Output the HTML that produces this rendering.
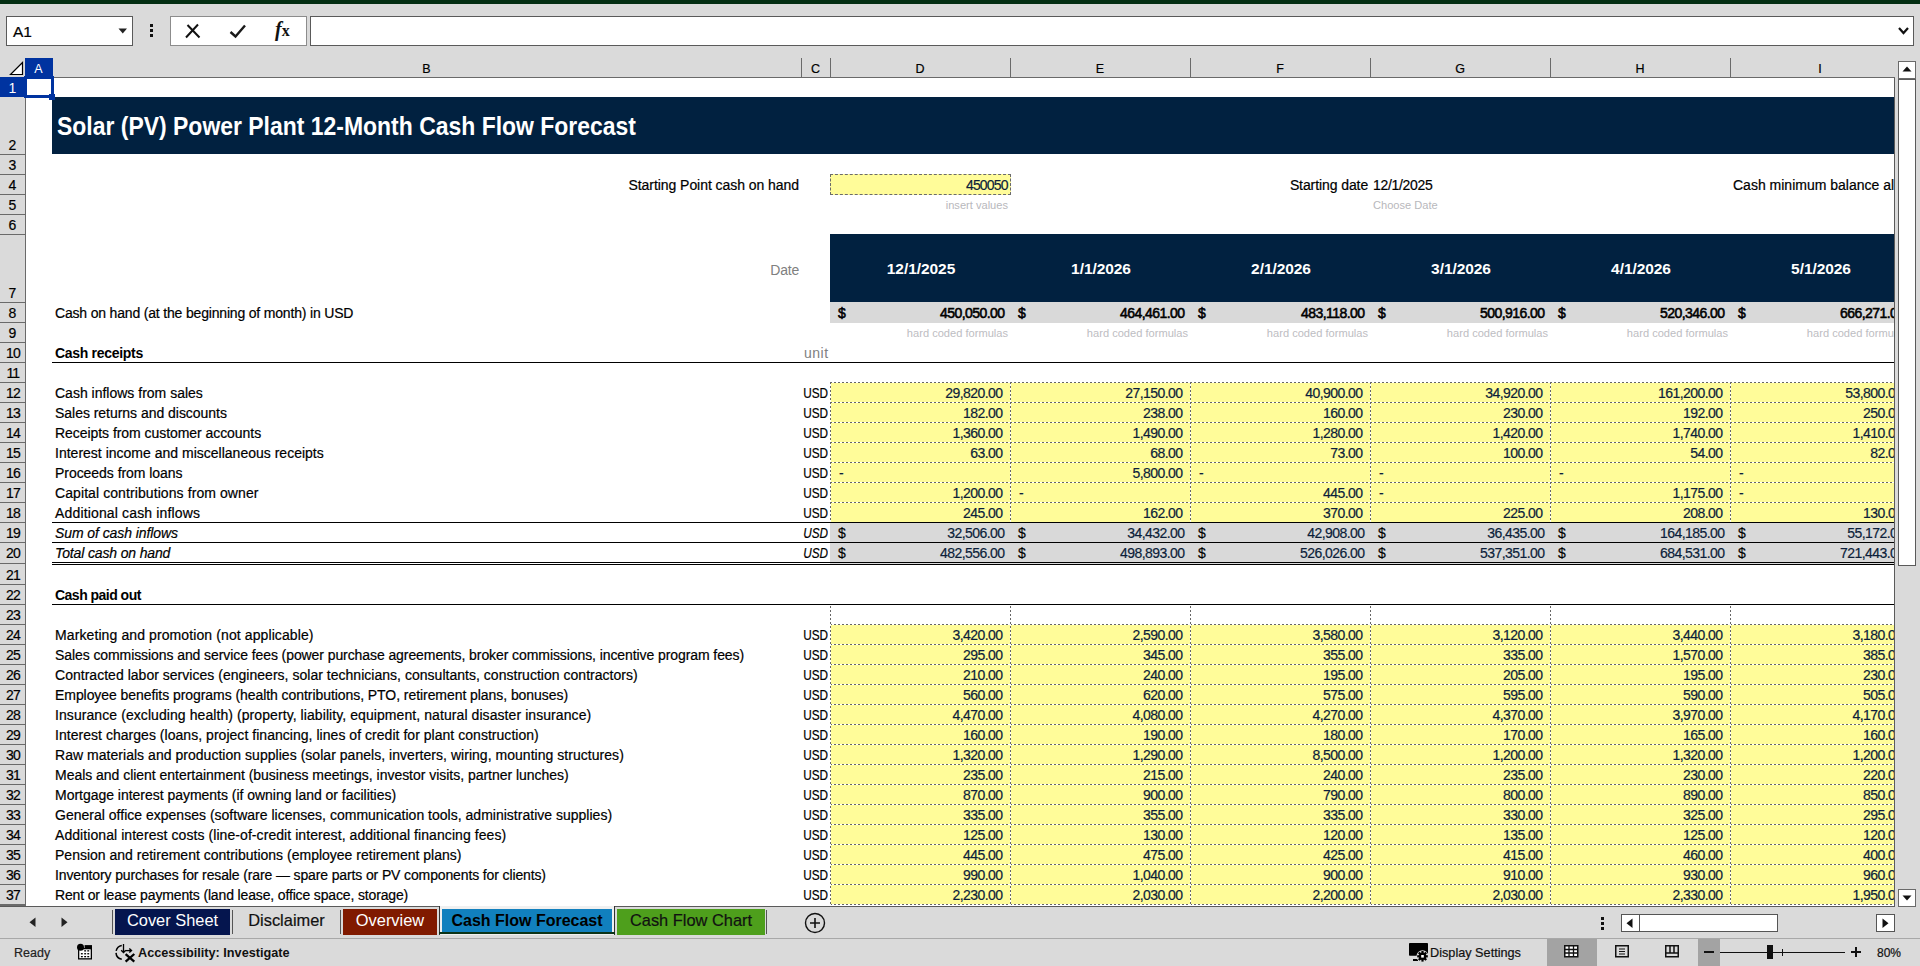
<!DOCTYPE html><html><head><meta charset="utf-8"><style>
html,body{margin:0;padding:0}
body{width:1920px;height:966px;overflow:hidden;position:relative;background:#dadada;font-family:"Liberation Sans", sans-serif}
.a{position:absolute}
.t{white-space:pre;overflow:visible}
</style></head><body>
<div class="a" style="left:0px;top:0px;width:1920px;height:4px;background:#042e12;"></div>
<div class="a" style="left:6px;top:16px;width:127px;height:30px;background:#fff;box-sizing:border-box;border:1px solid #5a5a5a;"></div>
<div class="a t" style="top:12px;height:40px;line-height:40px;font-size:15.5px;color:#000;left:13px;-webkit-text-stroke:0.2px currentColor;">A1</div>
<svg class="a" style="left:118px;top:28px" width="10" height="6"><path d="M0.5 0.5 L9 0.5 L4.75 5.5 Z" fill="#222"/></svg>
<div class="a" style="left:150px;top:24px;width:3px;height:3px;background:#111;"></div>
<div class="a" style="left:150px;top:29px;width:3px;height:3px;background:#111;"></div>
<div class="a" style="left:150px;top:34px;width:3px;height:3px;background:#111;"></div>
<div class="a" style="left:170px;top:16px;width:137px;height:30px;background:#fff;box-sizing:border-box;border:1px solid #8c8c8c;"></div>
<svg class="a" style="left:184px;top:23px" width="18" height="16"><path d="M2 14.5 L14 1.5 M3.5 2 L15.5 14.5" stroke="#111" stroke-width="2" fill="none"/></svg>
<svg class="a" style="left:229px;top:24px" width="19" height="16"><path d="M1.5 8 L6.5 12.5 L16 1.5" stroke="#1a1a1a" stroke-width="2.4" fill="none" stroke-linejoin="miter"/></svg>
<div class="a" style="left:275px;top:18px;font-family:'Liberation Serif',serif;font-style:italic;font-weight:bold;font-size:20px;line-height:22px;color:#111;white-space:pre">f<span style="font-size:16px;margin-left:0px;font-style:normal">x</span></div>
<div class="a" style="left:310px;top:16px;width:1604px;height:30px;background:#fff;box-sizing:border-box;border:1px solid #5a5a5a;"></div>
<svg class="a" style="left:1898px;top:27px" width="11" height="8"><path d="M1 1 L5.5 6 L10 1" stroke="#111" stroke-width="2.2" fill="none"/></svg>
<div class="a" style="left:25px;top:77px;width:1870px;height:829px;background:#fff;"></div>
<div class="a" style="left:25px;top:77px;width:1870px;height:829px;overflow:hidden">
<div class="a" style="left:27px;top:20px;width:1843px;height:57px;background:#012140;"></div>
<div class="a t" style="top:29px;height:40px;line-height:40px;font-size:25px;color:#fff;font-weight:bold;left:32px;transform:scaleX(0.918);transform-origin:left center;">Solar (PV) Power Plant 12-Month Cash Flow Forecast</div>
<div class="a t" style="top:88px;height:40px;line-height:40px;font-size:14px;color:#000;letter-spacing:-0.05px;left:-725.95px;width:1500px;text-align:right;-webkit-text-stroke:0.2px currentColor;">Starting Point cash on hand</div>
<div class="a" style="left:805px;top:97px;width:181px;height:21px;background:#fffc99;box-sizing:border-box;border:1px dashed #6b6b6b;"></div>
<div class="a t" style="top:88px;height:40px;line-height:40px;font-size:14px;color:#0c1e3a;letter-spacing:-0.8px;left:-517.20px;width:1500px;text-align:right;-webkit-text-stroke:0.2px currentColor;">450050</div>
<div class="a t" style="top:108px;height:40px;line-height:40px;font-size:11.1px;color:#b8b8bc;left:-517.00px;width:1500px;text-align:right;">insert values</div>
<div class="a t" style="top:88px;height:40px;line-height:40px;font-size:14px;color:#000;letter-spacing:-0.09px;left:-156.91px;width:1500px;text-align:right;-webkit-text-stroke:0.2px currentColor;">Starting date</div>
<div class="a t" style="top:88px;height:40px;line-height:40px;font-size:14px;color:#000;letter-spacing:-0.31px;left:1348px;-webkit-text-stroke:0.2px currentColor;">12/1/2025</div>
<div class="a t" style="top:108px;height:40px;line-height:40px;font-size:11.1px;color:#b8b8bc;left:1348px;">Choose Date</div>
<div class="a t" style="top:88px;height:40px;line-height:40px;font-size:14px;color:#000;left:1708px;-webkit-text-stroke:0.2px currentColor;">Cash minimum balance alert</div>
<div class="a" style="left:805px;top:157px;width:1065px;height:68px;background:#012140;"></div>
<div class="a t" style="top:173px;height:40px;line-height:40px;font-size:14px;color:#808080;letter-spacing:-0.17px;left:-725.83px;width:1500px;text-align:right;">Date</div>
<div class="a t" style="top:172px;height:40px;line-height:40px;font-size:15.5px;color:#fff;font-weight:bold;letter-spacing:-0.06px;left:806.03px;width:180px;text-align:center;">12/1/2025</div>
<div class="a t" style="top:172px;height:40px;line-height:40px;font-size:15.5px;color:#fff;font-weight:bold;letter-spacing:-0.06px;left:986.03px;width:180px;text-align:center;">1/1/2026</div>
<div class="a t" style="top:172px;height:40px;line-height:40px;font-size:15.5px;color:#fff;font-weight:bold;letter-spacing:-0.06px;left:1166.03px;width:180px;text-align:center;">2/1/2026</div>
<div class="a t" style="top:172px;height:40px;line-height:40px;font-size:15.5px;color:#fff;font-weight:bold;letter-spacing:-0.06px;left:1346.03px;width:180px;text-align:center;">3/1/2026</div>
<div class="a t" style="top:172px;height:40px;line-height:40px;font-size:15.5px;color:#fff;font-weight:bold;letter-spacing:-0.06px;left:1526.03px;width:180px;text-align:center;">4/1/2026</div>
<div class="a t" style="top:172px;height:40px;line-height:40px;font-size:15.5px;color:#fff;font-weight:bold;letter-spacing:-0.06px;left:1706.03px;width:180px;text-align:center;">5/1/2026</div>
<div class="a" style="left:805px;top:225px;width:1065px;height:21px;background:#d9d9d9;"></div>
<div class="a t" style="top:216px;height:40px;line-height:40px;font-size:14px;color:#000;letter-spacing:-0.178px;left:30px;-webkit-text-stroke:0.2px currentColor;">Cash on hand (at the beginning of month) in USD</div>
<div class="a t" style="top:216px;height:40px;line-height:40px;font-size:14px;color:#000;left:813px;-webkit-text-stroke:0.2px currentColor;-webkit-text-stroke:0.55px #000;">$</div>
<div class="a t" style="top:216px;height:40px;line-height:40px;font-size:14px;color:#000;letter-spacing:-0.55px;left:-520.45px;width:1500px;text-align:right;-webkit-text-stroke:0.2px currentColor;-webkit-text-stroke:0.55px #000;">450,050.00</div>
<div class="a t" style="top:216px;height:40px;line-height:40px;font-size:14px;color:#000;left:993px;-webkit-text-stroke:0.2px currentColor;-webkit-text-stroke:0.55px #000;">$</div>
<div class="a t" style="top:216px;height:40px;line-height:40px;font-size:14px;color:#000;letter-spacing:-0.55px;left:-340.45px;width:1500px;text-align:right;-webkit-text-stroke:0.2px currentColor;-webkit-text-stroke:0.55px #000;">464,461.00</div>
<div class="a t" style="top:216px;height:40px;line-height:40px;font-size:14px;color:#000;left:1173px;-webkit-text-stroke:0.2px currentColor;-webkit-text-stroke:0.55px #000;">$</div>
<div class="a t" style="top:216px;height:40px;line-height:40px;font-size:14px;color:#000;letter-spacing:-0.55px;left:-160.45px;width:1500px;text-align:right;-webkit-text-stroke:0.2px currentColor;-webkit-text-stroke:0.55px #000;">483,118.00</div>
<div class="a t" style="top:216px;height:40px;line-height:40px;font-size:14px;color:#000;left:1353px;-webkit-text-stroke:0.2px currentColor;-webkit-text-stroke:0.55px #000;">$</div>
<div class="a t" style="top:216px;height:40px;line-height:40px;font-size:14px;color:#000;letter-spacing:-0.55px;left:19.55px;width:1500px;text-align:right;-webkit-text-stroke:0.2px currentColor;-webkit-text-stroke:0.55px #000;">500,916.00</div>
<div class="a t" style="top:216px;height:40px;line-height:40px;font-size:14px;color:#000;left:1533px;-webkit-text-stroke:0.2px currentColor;-webkit-text-stroke:0.55px #000;">$</div>
<div class="a t" style="top:216px;height:40px;line-height:40px;font-size:14px;color:#000;letter-spacing:-0.55px;left:199.55px;width:1500px;text-align:right;-webkit-text-stroke:0.2px currentColor;-webkit-text-stroke:0.55px #000;">520,346.00</div>
<div class="a t" style="top:216px;height:40px;line-height:40px;font-size:14px;color:#000;left:1713px;-webkit-text-stroke:0.2px currentColor;-webkit-text-stroke:0.55px #000;">$</div>
<div class="a t" style="top:216px;height:40px;line-height:40px;font-size:14px;color:#000;letter-spacing:-0.55px;left:379.55px;width:1500px;text-align:right;-webkit-text-stroke:0.2px currentColor;-webkit-text-stroke:0.55px #000;">666,271.00</div>
<div class="a t" style="top:236px;height:40px;line-height:40px;font-size:11.1px;color:#bdbdc2;left:-517.00px;width:1500px;text-align:right;">hard coded formulas</div>
<div class="a t" style="top:236px;height:40px;line-height:40px;font-size:11.1px;color:#bdbdc2;left:-337.00px;width:1500px;text-align:right;">hard coded formulas</div>
<div class="a t" style="top:236px;height:40px;line-height:40px;font-size:11.1px;color:#bdbdc2;left:-157.00px;width:1500px;text-align:right;">hard coded formulas</div>
<div class="a t" style="top:236px;height:40px;line-height:40px;font-size:11.1px;color:#bdbdc2;left:23.00px;width:1500px;text-align:right;">hard coded formulas</div>
<div class="a t" style="top:236px;height:40px;line-height:40px;font-size:11.1px;color:#bdbdc2;left:203.00px;width:1500px;text-align:right;">hard coded formulas</div>
<div class="a t" style="top:236px;height:40px;line-height:40px;font-size:11.1px;color:#bdbdc2;left:383.00px;width:1500px;text-align:right;">hard coded formulas</div>
<div class="a t" style="top:256px;height:40px;line-height:40px;font-size:14px;color:#000;font-weight:bold;letter-spacing:-0.3px;left:30px;">Cash receipts</div>
<div class="a t" style="top:256px;height:40px;line-height:40px;font-size:14px;color:#808080;letter-spacing:0.5px;left:779px;">unit</div>
<div class="a" style="left:27px;top:285px;width:1843px;height:1px;background:#000;"></div>
<div class="a" style="left:805px;top:306px;width:1065px;height:140px;background:#fffc99;"></div>
<div class="a t" style="top:296px;height:40px;line-height:40px;font-size:14px;color:#000;left:30px;-webkit-text-stroke:0.2px currentColor;">Cash inflows from sales</div>
<div class="a t" style="top:296px;height:40px;line-height:40px;font-size:14px;color:#000;left:-697.00px;width:1500px;text-align:right;-webkit-text-stroke:0.2px currentColor;transform:scaleX(0.84);transform-origin:right center;">USD</div>
<div class="a t" style="top:296px;height:40px;line-height:40px;font-size:14px;color:#0c1e3a;letter-spacing:-0.55px;left:-522.45px;width:1500px;text-align:right;-webkit-text-stroke:0.2px currentColor;">29,820.00</div>
<div class="a t" style="top:296px;height:40px;line-height:40px;font-size:14px;color:#0c1e3a;letter-spacing:-0.55px;left:-342.45px;width:1500px;text-align:right;-webkit-text-stroke:0.2px currentColor;">27,150.00</div>
<div class="a t" style="top:296px;height:40px;line-height:40px;font-size:14px;color:#0c1e3a;letter-spacing:-0.55px;left:-162.45px;width:1500px;text-align:right;-webkit-text-stroke:0.2px currentColor;">40,900.00</div>
<div class="a t" style="top:296px;height:40px;line-height:40px;font-size:14px;color:#0c1e3a;letter-spacing:-0.55px;left:17.55px;width:1500px;text-align:right;-webkit-text-stroke:0.2px currentColor;">34,920.00</div>
<div class="a t" style="top:296px;height:40px;line-height:40px;font-size:14px;color:#0c1e3a;letter-spacing:-0.55px;left:197.55px;width:1500px;text-align:right;-webkit-text-stroke:0.2px currentColor;">161,200.00</div>
<div class="a t" style="top:296px;height:40px;line-height:40px;font-size:14px;color:#0c1e3a;letter-spacing:-0.55px;left:377.55px;width:1500px;text-align:right;-webkit-text-stroke:0.2px currentColor;">53,800.00</div>
<div class="a t" style="top:316px;height:40px;line-height:40px;font-size:14px;color:#000;letter-spacing:-0.031px;left:30px;-webkit-text-stroke:0.2px currentColor;">Sales returns and discounts</div>
<div class="a t" style="top:316px;height:40px;line-height:40px;font-size:14px;color:#000;left:-697.00px;width:1500px;text-align:right;-webkit-text-stroke:0.2px currentColor;transform:scaleX(0.84);transform-origin:right center;">USD</div>
<div class="a t" style="top:316px;height:40px;line-height:40px;font-size:14px;color:#0c1e3a;letter-spacing:-0.55px;left:-522.45px;width:1500px;text-align:right;-webkit-text-stroke:0.2px currentColor;">182.00</div>
<div class="a t" style="top:316px;height:40px;line-height:40px;font-size:14px;color:#0c1e3a;letter-spacing:-0.55px;left:-342.45px;width:1500px;text-align:right;-webkit-text-stroke:0.2px currentColor;">238.00</div>
<div class="a t" style="top:316px;height:40px;line-height:40px;font-size:14px;color:#0c1e3a;letter-spacing:-0.55px;left:-162.45px;width:1500px;text-align:right;-webkit-text-stroke:0.2px currentColor;">160.00</div>
<div class="a t" style="top:316px;height:40px;line-height:40px;font-size:14px;color:#0c1e3a;letter-spacing:-0.55px;left:17.55px;width:1500px;text-align:right;-webkit-text-stroke:0.2px currentColor;">230.00</div>
<div class="a t" style="top:316px;height:40px;line-height:40px;font-size:14px;color:#0c1e3a;letter-spacing:-0.55px;left:197.55px;width:1500px;text-align:right;-webkit-text-stroke:0.2px currentColor;">192.00</div>
<div class="a t" style="top:316px;height:40px;line-height:40px;font-size:14px;color:#0c1e3a;letter-spacing:-0.55px;left:377.55px;width:1500px;text-align:right;-webkit-text-stroke:0.2px currentColor;">250.00</div>
<div class="a t" style="top:336px;height:40px;line-height:40px;font-size:14px;color:#000;letter-spacing:-0.053px;left:30px;-webkit-text-stroke:0.2px currentColor;">Receipts from customer accounts</div>
<div class="a t" style="top:336px;height:40px;line-height:40px;font-size:14px;color:#000;left:-697.00px;width:1500px;text-align:right;-webkit-text-stroke:0.2px currentColor;transform:scaleX(0.84);transform-origin:right center;">USD</div>
<div class="a t" style="top:336px;height:40px;line-height:40px;font-size:14px;color:#0c1e3a;letter-spacing:-0.55px;left:-522.45px;width:1500px;text-align:right;-webkit-text-stroke:0.2px currentColor;">1,360.00</div>
<div class="a t" style="top:336px;height:40px;line-height:40px;font-size:14px;color:#0c1e3a;letter-spacing:-0.55px;left:-342.45px;width:1500px;text-align:right;-webkit-text-stroke:0.2px currentColor;">1,490.00</div>
<div class="a t" style="top:336px;height:40px;line-height:40px;font-size:14px;color:#0c1e3a;letter-spacing:-0.55px;left:-162.45px;width:1500px;text-align:right;-webkit-text-stroke:0.2px currentColor;">1,280.00</div>
<div class="a t" style="top:336px;height:40px;line-height:40px;font-size:14px;color:#0c1e3a;letter-spacing:-0.55px;left:17.55px;width:1500px;text-align:right;-webkit-text-stroke:0.2px currentColor;">1,420.00</div>
<div class="a t" style="top:336px;height:40px;line-height:40px;font-size:14px;color:#0c1e3a;letter-spacing:-0.55px;left:197.55px;width:1500px;text-align:right;-webkit-text-stroke:0.2px currentColor;">1,740.00</div>
<div class="a t" style="top:336px;height:40px;line-height:40px;font-size:14px;color:#0c1e3a;letter-spacing:-0.55px;left:377.55px;width:1500px;text-align:right;-webkit-text-stroke:0.2px currentColor;">1,410.00</div>
<div class="a t" style="top:356px;height:40px;line-height:40px;font-size:14px;color:#000;letter-spacing:0.007px;left:30px;-webkit-text-stroke:0.2px currentColor;">Interest income and miscellaneous receipts</div>
<div class="a t" style="top:356px;height:40px;line-height:40px;font-size:14px;color:#000;left:-697.00px;width:1500px;text-align:right;-webkit-text-stroke:0.2px currentColor;transform:scaleX(0.84);transform-origin:right center;">USD</div>
<div class="a t" style="top:356px;height:40px;line-height:40px;font-size:14px;color:#0c1e3a;letter-spacing:-0.55px;left:-522.45px;width:1500px;text-align:right;-webkit-text-stroke:0.2px currentColor;">63.00</div>
<div class="a t" style="top:356px;height:40px;line-height:40px;font-size:14px;color:#0c1e3a;letter-spacing:-0.55px;left:-342.45px;width:1500px;text-align:right;-webkit-text-stroke:0.2px currentColor;">68.00</div>
<div class="a t" style="top:356px;height:40px;line-height:40px;font-size:14px;color:#0c1e3a;letter-spacing:-0.55px;left:-162.45px;width:1500px;text-align:right;-webkit-text-stroke:0.2px currentColor;">73.00</div>
<div class="a t" style="top:356px;height:40px;line-height:40px;font-size:14px;color:#0c1e3a;letter-spacing:-0.55px;left:17.55px;width:1500px;text-align:right;-webkit-text-stroke:0.2px currentColor;">100.00</div>
<div class="a t" style="top:356px;height:40px;line-height:40px;font-size:14px;color:#0c1e3a;letter-spacing:-0.55px;left:197.55px;width:1500px;text-align:right;-webkit-text-stroke:0.2px currentColor;">54.00</div>
<div class="a t" style="top:356px;height:40px;line-height:40px;font-size:14px;color:#0c1e3a;letter-spacing:-0.55px;left:377.55px;width:1500px;text-align:right;-webkit-text-stroke:0.2px currentColor;">82.00</div>
<div class="a t" style="top:376px;height:40px;line-height:40px;font-size:14px;color:#000;letter-spacing:-0.044px;left:30px;-webkit-text-stroke:0.2px currentColor;">Proceeds from loans</div>
<div class="a t" style="top:376px;height:40px;line-height:40px;font-size:14px;color:#000;left:-697.00px;width:1500px;text-align:right;-webkit-text-stroke:0.2px currentColor;transform:scaleX(0.84);transform-origin:right center;">USD</div>
<div class="a t" style="top:376px;height:40px;line-height:40px;font-size:14px;color:#0c1e3a;left:814px;-webkit-text-stroke:0.2px currentColor;">-</div>
<div class="a t" style="top:376px;height:40px;line-height:40px;font-size:14px;color:#0c1e3a;letter-spacing:-0.55px;left:-342.45px;width:1500px;text-align:right;-webkit-text-stroke:0.2px currentColor;">5,800.00</div>
<div class="a t" style="top:376px;height:40px;line-height:40px;font-size:14px;color:#0c1e3a;left:1174px;-webkit-text-stroke:0.2px currentColor;">-</div>
<div class="a t" style="top:376px;height:40px;line-height:40px;font-size:14px;color:#0c1e3a;left:1354px;-webkit-text-stroke:0.2px currentColor;">-</div>
<div class="a t" style="top:376px;height:40px;line-height:40px;font-size:14px;color:#0c1e3a;left:1534px;-webkit-text-stroke:0.2px currentColor;">-</div>
<div class="a t" style="top:376px;height:40px;line-height:40px;font-size:14px;color:#0c1e3a;left:1714px;-webkit-text-stroke:0.2px currentColor;">-</div>
<div class="a t" style="top:396px;height:40px;line-height:40px;font-size:14px;color:#000;letter-spacing:0.087px;left:30px;-webkit-text-stroke:0.2px currentColor;">Capital contributions from owner</div>
<div class="a t" style="top:396px;height:40px;line-height:40px;font-size:14px;color:#000;left:-697.00px;width:1500px;text-align:right;-webkit-text-stroke:0.2px currentColor;transform:scaleX(0.84);transform-origin:right center;">USD</div>
<div class="a t" style="top:396px;height:40px;line-height:40px;font-size:14px;color:#0c1e3a;letter-spacing:-0.55px;left:-522.45px;width:1500px;text-align:right;-webkit-text-stroke:0.2px currentColor;">1,200.00</div>
<div class="a t" style="top:396px;height:40px;line-height:40px;font-size:14px;color:#0c1e3a;left:994px;-webkit-text-stroke:0.2px currentColor;">-</div>
<div class="a t" style="top:396px;height:40px;line-height:40px;font-size:14px;color:#0c1e3a;letter-spacing:-0.55px;left:-162.45px;width:1500px;text-align:right;-webkit-text-stroke:0.2px currentColor;">445.00</div>
<div class="a t" style="top:396px;height:40px;line-height:40px;font-size:14px;color:#0c1e3a;left:1354px;-webkit-text-stroke:0.2px currentColor;">-</div>
<div class="a t" style="top:396px;height:40px;line-height:40px;font-size:14px;color:#0c1e3a;letter-spacing:-0.55px;left:197.55px;width:1500px;text-align:right;-webkit-text-stroke:0.2px currentColor;">1,175.00</div>
<div class="a t" style="top:396px;height:40px;line-height:40px;font-size:14px;color:#0c1e3a;left:1714px;-webkit-text-stroke:0.2px currentColor;">-</div>
<div class="a t" style="top:416px;height:40px;line-height:40px;font-size:14px;color:#000;letter-spacing:0.155px;left:30px;-webkit-text-stroke:0.2px currentColor;">Additional cash inflows</div>
<div class="a t" style="top:416px;height:40px;line-height:40px;font-size:14px;color:#000;left:-697.00px;width:1500px;text-align:right;-webkit-text-stroke:0.2px currentColor;transform:scaleX(0.84);transform-origin:right center;">USD</div>
<div class="a t" style="top:416px;height:40px;line-height:40px;font-size:14px;color:#0c1e3a;letter-spacing:-0.55px;left:-522.45px;width:1500px;text-align:right;-webkit-text-stroke:0.2px currentColor;">245.00</div>
<div class="a t" style="top:416px;height:40px;line-height:40px;font-size:14px;color:#0c1e3a;letter-spacing:-0.55px;left:-342.45px;width:1500px;text-align:right;-webkit-text-stroke:0.2px currentColor;">162.00</div>
<div class="a t" style="top:416px;height:40px;line-height:40px;font-size:14px;color:#0c1e3a;letter-spacing:-0.55px;left:-162.45px;width:1500px;text-align:right;-webkit-text-stroke:0.2px currentColor;">370.00</div>
<div class="a t" style="top:416px;height:40px;line-height:40px;font-size:14px;color:#0c1e3a;letter-spacing:-0.55px;left:17.55px;width:1500px;text-align:right;-webkit-text-stroke:0.2px currentColor;">225.00</div>
<div class="a t" style="top:416px;height:40px;line-height:40px;font-size:14px;color:#0c1e3a;letter-spacing:-0.55px;left:197.55px;width:1500px;text-align:right;-webkit-text-stroke:0.2px currentColor;">208.00</div>
<div class="a t" style="top:416px;height:40px;line-height:40px;font-size:14px;color:#0c1e3a;letter-spacing:-0.55px;left:377.55px;width:1500px;text-align:right;-webkit-text-stroke:0.2px currentColor;">130.00</div>
<div class="a" style="left:805px;top:305px;width:1065px;height:1px;background:repeating-linear-gradient(90deg,#666 0 2px,#fff 2px 4px);"></div>
<div class="a" style="left:805px;top:325px;width:1065px;height:1px;background:repeating-linear-gradient(90deg,#666 0 2px,#fff 2px 4px);"></div>
<div class="a" style="left:805px;top:345px;width:1065px;height:1px;background:repeating-linear-gradient(90deg,#666 0 2px,#fff 2px 4px);"></div>
<div class="a" style="left:805px;top:365px;width:1065px;height:1px;background:repeating-linear-gradient(90deg,#666 0 2px,#fff 2px 4px);"></div>
<div class="a" style="left:805px;top:385px;width:1065px;height:1px;background:repeating-linear-gradient(90deg,#666 0 2px,#fff 2px 4px);"></div>
<div class="a" style="left:805px;top:405px;width:1065px;height:1px;background:repeating-linear-gradient(90deg,#666 0 2px,#fff 2px 4px);"></div>
<div class="a" style="left:805px;top:425px;width:1065px;height:1px;background:repeating-linear-gradient(90deg,#666 0 2px,#fff 2px 4px);"></div>
<div class="a" style="left:805px;top:445px;width:1065px;height:1px;background:repeating-linear-gradient(90deg,#666 0 2px,#fff 2px 4px);"></div>
<div class="a" style="left:805px;top:305px;width:1px;height:140px;background:repeating-linear-gradient(180deg,#666 0 2px,#fff 2px 4px);"></div>
<div class="a" style="left:985px;top:305px;width:1px;height:140px;background:repeating-linear-gradient(180deg,#666 0 2px,#fff 2px 4px);"></div>
<div class="a" style="left:1165px;top:305px;width:1px;height:140px;background:repeating-linear-gradient(180deg,#666 0 2px,#fff 2px 4px);"></div>
<div class="a" style="left:1345px;top:305px;width:1px;height:140px;background:repeating-linear-gradient(180deg,#666 0 2px,#fff 2px 4px);"></div>
<div class="a" style="left:1525px;top:305px;width:1px;height:140px;background:repeating-linear-gradient(180deg,#666 0 2px,#fff 2px 4px);"></div>
<div class="a" style="left:1705px;top:305px;width:1px;height:140px;background:repeating-linear-gradient(180deg,#666 0 2px,#fff 2px 4px);"></div>
<div class="a" style="left:805px;top:446px;width:1065px;height:41px;background:#d9d9d9;"></div>
<div class="a" style="left:27px;top:445px;width:1843px;height:1px;background:#000;"></div>
<div class="a" style="left:27px;top:465px;width:1843px;height:1px;background:#000;"></div>
<div class="a" style="left:27px;top:485px;width:1843px;height:1px;background:#000;"></div>
<div class="a" style="left:27px;top:487px;width:1843px;height:1px;background:#000;"></div>
<div class="a t" style="top:436px;height:40px;line-height:40px;font-size:14px;color:#000;font-style:italic;letter-spacing:-0.083px;left:30px;-webkit-text-stroke:0.2px currentColor;">Sum of cash inflows</div>
<div class="a t" style="top:436px;height:40px;line-height:40px;font-size:14px;color:#000;font-style:italic;left:-697.00px;width:1500px;text-align:right;-webkit-text-stroke:0.2px currentColor;transform:scaleX(0.84);transform-origin:right center;">USD</div>
<div class="a t" style="top:436px;height:40px;line-height:40px;font-size:14px;color:#000;left:813px;-webkit-text-stroke:0.2px currentColor;">$</div>
<div class="a t" style="top:436px;height:40px;line-height:40px;font-size:14px;color:#0c1e3a;letter-spacing:-0.55px;left:-520.45px;width:1500px;text-align:right;-webkit-text-stroke:0.2px currentColor;">32,506.00</div>
<div class="a t" style="top:436px;height:40px;line-height:40px;font-size:14px;color:#000;left:993px;-webkit-text-stroke:0.2px currentColor;">$</div>
<div class="a t" style="top:436px;height:40px;line-height:40px;font-size:14px;color:#0c1e3a;letter-spacing:-0.55px;left:-340.45px;width:1500px;text-align:right;-webkit-text-stroke:0.2px currentColor;">34,432.00</div>
<div class="a t" style="top:436px;height:40px;line-height:40px;font-size:14px;color:#000;left:1173px;-webkit-text-stroke:0.2px currentColor;">$</div>
<div class="a t" style="top:436px;height:40px;line-height:40px;font-size:14px;color:#0c1e3a;letter-spacing:-0.55px;left:-160.45px;width:1500px;text-align:right;-webkit-text-stroke:0.2px currentColor;">42,908.00</div>
<div class="a t" style="top:436px;height:40px;line-height:40px;font-size:14px;color:#000;left:1353px;-webkit-text-stroke:0.2px currentColor;">$</div>
<div class="a t" style="top:436px;height:40px;line-height:40px;font-size:14px;color:#0c1e3a;letter-spacing:-0.55px;left:19.55px;width:1500px;text-align:right;-webkit-text-stroke:0.2px currentColor;">36,435.00</div>
<div class="a t" style="top:436px;height:40px;line-height:40px;font-size:14px;color:#000;left:1533px;-webkit-text-stroke:0.2px currentColor;">$</div>
<div class="a t" style="top:436px;height:40px;line-height:40px;font-size:14px;color:#0c1e3a;letter-spacing:-0.55px;left:199.55px;width:1500px;text-align:right;-webkit-text-stroke:0.2px currentColor;">164,185.00</div>
<div class="a t" style="top:436px;height:40px;line-height:40px;font-size:14px;color:#000;left:1713px;-webkit-text-stroke:0.2px currentColor;">$</div>
<div class="a t" style="top:436px;height:40px;line-height:40px;font-size:14px;color:#0c1e3a;letter-spacing:-0.55px;left:379.55px;width:1500px;text-align:right;-webkit-text-stroke:0.2px currentColor;">55,172.00</div>
<div class="a t" style="top:456px;height:40px;line-height:40px;font-size:14px;color:#000;font-style:italic;letter-spacing:-0.141px;left:30px;-webkit-text-stroke:0.2px currentColor;">Total cash on hand</div>
<div class="a t" style="top:456px;height:40px;line-height:40px;font-size:14px;color:#000;font-style:italic;left:-697.00px;width:1500px;text-align:right;-webkit-text-stroke:0.2px currentColor;transform:scaleX(0.84);transform-origin:right center;">USD</div>
<div class="a t" style="top:456px;height:40px;line-height:40px;font-size:14px;color:#000;left:813px;-webkit-text-stroke:0.2px currentColor;">$</div>
<div class="a t" style="top:456px;height:40px;line-height:40px;font-size:14px;color:#0c1e3a;letter-spacing:-0.55px;left:-520.45px;width:1500px;text-align:right;-webkit-text-stroke:0.2px currentColor;">482,556.00</div>
<div class="a t" style="top:456px;height:40px;line-height:40px;font-size:14px;color:#000;left:993px;-webkit-text-stroke:0.2px currentColor;">$</div>
<div class="a t" style="top:456px;height:40px;line-height:40px;font-size:14px;color:#0c1e3a;letter-spacing:-0.55px;left:-340.45px;width:1500px;text-align:right;-webkit-text-stroke:0.2px currentColor;">498,893.00</div>
<div class="a t" style="top:456px;height:40px;line-height:40px;font-size:14px;color:#000;left:1173px;-webkit-text-stroke:0.2px currentColor;">$</div>
<div class="a t" style="top:456px;height:40px;line-height:40px;font-size:14px;color:#0c1e3a;letter-spacing:-0.55px;left:-160.45px;width:1500px;text-align:right;-webkit-text-stroke:0.2px currentColor;">526,026.00</div>
<div class="a t" style="top:456px;height:40px;line-height:40px;font-size:14px;color:#000;left:1353px;-webkit-text-stroke:0.2px currentColor;">$</div>
<div class="a t" style="top:456px;height:40px;line-height:40px;font-size:14px;color:#0c1e3a;letter-spacing:-0.55px;left:19.55px;width:1500px;text-align:right;-webkit-text-stroke:0.2px currentColor;">537,351.00</div>
<div class="a t" style="top:456px;height:40px;line-height:40px;font-size:14px;color:#000;left:1533px;-webkit-text-stroke:0.2px currentColor;">$</div>
<div class="a t" style="top:456px;height:40px;line-height:40px;font-size:14px;color:#0c1e3a;letter-spacing:-0.55px;left:199.55px;width:1500px;text-align:right;-webkit-text-stroke:0.2px currentColor;">684,531.00</div>
<div class="a t" style="top:456px;height:40px;line-height:40px;font-size:14px;color:#000;left:1713px;-webkit-text-stroke:0.2px currentColor;">$</div>
<div class="a t" style="top:456px;height:40px;line-height:40px;font-size:14px;color:#0c1e3a;letter-spacing:-0.55px;left:379.55px;width:1500px;text-align:right;-webkit-text-stroke:0.2px currentColor;">721,443.00</div>
<div class="a t" style="top:498px;height:40px;line-height:40px;font-size:14px;color:#000;font-weight:bold;letter-spacing:-0.517px;left:30px;">Cash paid out</div>
<div class="a" style="left:27px;top:527px;width:1843px;height:1px;background:#000;"></div>
<div class="a" style="left:805px;top:548px;width:1065px;height:280px;background:#fffc99;"></div>
<div class="a t" style="top:538px;height:40px;line-height:40px;font-size:14px;color:#000;letter-spacing:0.103px;left:30px;-webkit-text-stroke:0.2px currentColor;">Marketing and promotion (not applicable)</div>
<div class="a t" style="top:538px;height:40px;line-height:40px;font-size:14px;color:#000;left:-697.00px;width:1500px;text-align:right;-webkit-text-stroke:0.2px currentColor;transform:scaleX(0.84);transform-origin:right center;">USD</div>
<div class="a t" style="top:538px;height:40px;line-height:40px;font-size:14px;color:#0c1e3a;letter-spacing:-0.55px;left:-522.45px;width:1500px;text-align:right;-webkit-text-stroke:0.2px currentColor;">3,420.00</div>
<div class="a t" style="top:538px;height:40px;line-height:40px;font-size:14px;color:#0c1e3a;letter-spacing:-0.55px;left:-342.45px;width:1500px;text-align:right;-webkit-text-stroke:0.2px currentColor;">2,590.00</div>
<div class="a t" style="top:538px;height:40px;line-height:40px;font-size:14px;color:#0c1e3a;letter-spacing:-0.55px;left:-162.45px;width:1500px;text-align:right;-webkit-text-stroke:0.2px currentColor;">3,580.00</div>
<div class="a t" style="top:538px;height:40px;line-height:40px;font-size:14px;color:#0c1e3a;letter-spacing:-0.55px;left:17.55px;width:1500px;text-align:right;-webkit-text-stroke:0.2px currentColor;">3,120.00</div>
<div class="a t" style="top:538px;height:40px;line-height:40px;font-size:14px;color:#0c1e3a;letter-spacing:-0.55px;left:197.55px;width:1500px;text-align:right;-webkit-text-stroke:0.2px currentColor;">3,440.00</div>
<div class="a t" style="top:538px;height:40px;line-height:40px;font-size:14px;color:#0c1e3a;letter-spacing:-0.55px;left:377.55px;width:1500px;text-align:right;-webkit-text-stroke:0.2px currentColor;">3,180.00</div>
<div class="a t" style="top:558px;height:40px;line-height:40px;font-size:14px;color:#000;letter-spacing:-0.084px;left:30px;-webkit-text-stroke:0.2px currentColor;">Sales commissions and service fees (power purchase agreements, broker commissions, incentive program fees)</div>
<div class="a t" style="top:558px;height:40px;line-height:40px;font-size:14px;color:#000;left:-697.00px;width:1500px;text-align:right;-webkit-text-stroke:0.2px currentColor;transform:scaleX(0.84);transform-origin:right center;">USD</div>
<div class="a t" style="top:558px;height:40px;line-height:40px;font-size:14px;color:#0c1e3a;letter-spacing:-0.55px;left:-522.45px;width:1500px;text-align:right;-webkit-text-stroke:0.2px currentColor;">295.00</div>
<div class="a t" style="top:558px;height:40px;line-height:40px;font-size:14px;color:#0c1e3a;letter-spacing:-0.55px;left:-342.45px;width:1500px;text-align:right;-webkit-text-stroke:0.2px currentColor;">345.00</div>
<div class="a t" style="top:558px;height:40px;line-height:40px;font-size:14px;color:#0c1e3a;letter-spacing:-0.55px;left:-162.45px;width:1500px;text-align:right;-webkit-text-stroke:0.2px currentColor;">355.00</div>
<div class="a t" style="top:558px;height:40px;line-height:40px;font-size:14px;color:#0c1e3a;letter-spacing:-0.55px;left:17.55px;width:1500px;text-align:right;-webkit-text-stroke:0.2px currentColor;">335.00</div>
<div class="a t" style="top:558px;height:40px;line-height:40px;font-size:14px;color:#0c1e3a;letter-spacing:-0.55px;left:197.55px;width:1500px;text-align:right;-webkit-text-stroke:0.2px currentColor;">1,570.00</div>
<div class="a t" style="top:558px;height:40px;line-height:40px;font-size:14px;color:#0c1e3a;letter-spacing:-0.55px;left:377.55px;width:1500px;text-align:right;-webkit-text-stroke:0.2px currentColor;">385.00</div>
<div class="a t" style="top:578px;height:40px;line-height:40px;font-size:14px;color:#000;letter-spacing:0.023px;left:30px;-webkit-text-stroke:0.2px currentColor;">Contracted labor services (engineers, solar technicians, consultants, construction contractors)</div>
<div class="a t" style="top:578px;height:40px;line-height:40px;font-size:14px;color:#000;left:-697.00px;width:1500px;text-align:right;-webkit-text-stroke:0.2px currentColor;transform:scaleX(0.84);transform-origin:right center;">USD</div>
<div class="a t" style="top:578px;height:40px;line-height:40px;font-size:14px;color:#0c1e3a;letter-spacing:-0.55px;left:-522.45px;width:1500px;text-align:right;-webkit-text-stroke:0.2px currentColor;">210.00</div>
<div class="a t" style="top:578px;height:40px;line-height:40px;font-size:14px;color:#0c1e3a;letter-spacing:-0.55px;left:-342.45px;width:1500px;text-align:right;-webkit-text-stroke:0.2px currentColor;">240.00</div>
<div class="a t" style="top:578px;height:40px;line-height:40px;font-size:14px;color:#0c1e3a;letter-spacing:-0.55px;left:-162.45px;width:1500px;text-align:right;-webkit-text-stroke:0.2px currentColor;">195.00</div>
<div class="a t" style="top:578px;height:40px;line-height:40px;font-size:14px;color:#0c1e3a;letter-spacing:-0.55px;left:17.55px;width:1500px;text-align:right;-webkit-text-stroke:0.2px currentColor;">205.00</div>
<div class="a t" style="top:578px;height:40px;line-height:40px;font-size:14px;color:#0c1e3a;letter-spacing:-0.55px;left:197.55px;width:1500px;text-align:right;-webkit-text-stroke:0.2px currentColor;">195.00</div>
<div class="a t" style="top:578px;height:40px;line-height:40px;font-size:14px;color:#0c1e3a;letter-spacing:-0.55px;left:377.55px;width:1500px;text-align:right;-webkit-text-stroke:0.2px currentColor;">230.00</div>
<div class="a t" style="top:598px;height:40px;line-height:40px;font-size:14px;color:#000;letter-spacing:-0.062px;left:30px;-webkit-text-stroke:0.2px currentColor;">Employee benefits programs (health contributions, PTO, retirement plans, bonuses)</div>
<div class="a t" style="top:598px;height:40px;line-height:40px;font-size:14px;color:#000;left:-697.00px;width:1500px;text-align:right;-webkit-text-stroke:0.2px currentColor;transform:scaleX(0.84);transform-origin:right center;">USD</div>
<div class="a t" style="top:598px;height:40px;line-height:40px;font-size:14px;color:#0c1e3a;letter-spacing:-0.55px;left:-522.45px;width:1500px;text-align:right;-webkit-text-stroke:0.2px currentColor;">560.00</div>
<div class="a t" style="top:598px;height:40px;line-height:40px;font-size:14px;color:#0c1e3a;letter-spacing:-0.55px;left:-342.45px;width:1500px;text-align:right;-webkit-text-stroke:0.2px currentColor;">620.00</div>
<div class="a t" style="top:598px;height:40px;line-height:40px;font-size:14px;color:#0c1e3a;letter-spacing:-0.55px;left:-162.45px;width:1500px;text-align:right;-webkit-text-stroke:0.2px currentColor;">575.00</div>
<div class="a t" style="top:598px;height:40px;line-height:40px;font-size:14px;color:#0c1e3a;letter-spacing:-0.55px;left:17.55px;width:1500px;text-align:right;-webkit-text-stroke:0.2px currentColor;">595.00</div>
<div class="a t" style="top:598px;height:40px;line-height:40px;font-size:14px;color:#0c1e3a;letter-spacing:-0.55px;left:197.55px;width:1500px;text-align:right;-webkit-text-stroke:0.2px currentColor;">590.00</div>
<div class="a t" style="top:598px;height:40px;line-height:40px;font-size:14px;color:#0c1e3a;letter-spacing:-0.55px;left:377.55px;width:1500px;text-align:right;-webkit-text-stroke:0.2px currentColor;">505.00</div>
<div class="a t" style="top:618px;height:40px;line-height:40px;font-size:14px;color:#000;letter-spacing:0.077px;left:30px;-webkit-text-stroke:0.2px currentColor;">Insurance (excluding health) (property, liability, equipment, natural disaster insurance)</div>
<div class="a t" style="top:618px;height:40px;line-height:40px;font-size:14px;color:#000;left:-697.00px;width:1500px;text-align:right;-webkit-text-stroke:0.2px currentColor;transform:scaleX(0.84);transform-origin:right center;">USD</div>
<div class="a t" style="top:618px;height:40px;line-height:40px;font-size:14px;color:#0c1e3a;letter-spacing:-0.55px;left:-522.45px;width:1500px;text-align:right;-webkit-text-stroke:0.2px currentColor;">4,470.00</div>
<div class="a t" style="top:618px;height:40px;line-height:40px;font-size:14px;color:#0c1e3a;letter-spacing:-0.55px;left:-342.45px;width:1500px;text-align:right;-webkit-text-stroke:0.2px currentColor;">4,080.00</div>
<div class="a t" style="top:618px;height:40px;line-height:40px;font-size:14px;color:#0c1e3a;letter-spacing:-0.55px;left:-162.45px;width:1500px;text-align:right;-webkit-text-stroke:0.2px currentColor;">4,270.00</div>
<div class="a t" style="top:618px;height:40px;line-height:40px;font-size:14px;color:#0c1e3a;letter-spacing:-0.55px;left:17.55px;width:1500px;text-align:right;-webkit-text-stroke:0.2px currentColor;">4,370.00</div>
<div class="a t" style="top:618px;height:40px;line-height:40px;font-size:14px;color:#0c1e3a;letter-spacing:-0.55px;left:197.55px;width:1500px;text-align:right;-webkit-text-stroke:0.2px currentColor;">3,970.00</div>
<div class="a t" style="top:618px;height:40px;line-height:40px;font-size:14px;color:#0c1e3a;letter-spacing:-0.55px;left:377.55px;width:1500px;text-align:right;-webkit-text-stroke:0.2px currentColor;">4,170.00</div>
<div class="a t" style="top:638px;height:40px;line-height:40px;font-size:14px;color:#000;letter-spacing:0.035px;left:30px;-webkit-text-stroke:0.2px currentColor;">Interest charges (loans, project financing, lines of credit for plant construction)</div>
<div class="a t" style="top:638px;height:40px;line-height:40px;font-size:14px;color:#000;left:-697.00px;width:1500px;text-align:right;-webkit-text-stroke:0.2px currentColor;transform:scaleX(0.84);transform-origin:right center;">USD</div>
<div class="a t" style="top:638px;height:40px;line-height:40px;font-size:14px;color:#0c1e3a;letter-spacing:-0.55px;left:-522.45px;width:1500px;text-align:right;-webkit-text-stroke:0.2px currentColor;">160.00</div>
<div class="a t" style="top:638px;height:40px;line-height:40px;font-size:14px;color:#0c1e3a;letter-spacing:-0.55px;left:-342.45px;width:1500px;text-align:right;-webkit-text-stroke:0.2px currentColor;">190.00</div>
<div class="a t" style="top:638px;height:40px;line-height:40px;font-size:14px;color:#0c1e3a;letter-spacing:-0.55px;left:-162.45px;width:1500px;text-align:right;-webkit-text-stroke:0.2px currentColor;">180.00</div>
<div class="a t" style="top:638px;height:40px;line-height:40px;font-size:14px;color:#0c1e3a;letter-spacing:-0.55px;left:17.55px;width:1500px;text-align:right;-webkit-text-stroke:0.2px currentColor;">170.00</div>
<div class="a t" style="top:638px;height:40px;line-height:40px;font-size:14px;color:#0c1e3a;letter-spacing:-0.55px;left:197.55px;width:1500px;text-align:right;-webkit-text-stroke:0.2px currentColor;">165.00</div>
<div class="a t" style="top:638px;height:40px;line-height:40px;font-size:14px;color:#0c1e3a;letter-spacing:-0.55px;left:377.55px;width:1500px;text-align:right;-webkit-text-stroke:0.2px currentColor;">160.00</div>
<div class="a t" style="top:658px;height:40px;line-height:40px;font-size:14px;color:#000;letter-spacing:0.034px;left:30px;-webkit-text-stroke:0.2px currentColor;">Raw materials and production supplies (solar panels, inverters, wiring, mounting structures)</div>
<div class="a t" style="top:658px;height:40px;line-height:40px;font-size:14px;color:#000;left:-697.00px;width:1500px;text-align:right;-webkit-text-stroke:0.2px currentColor;transform:scaleX(0.84);transform-origin:right center;">USD</div>
<div class="a t" style="top:658px;height:40px;line-height:40px;font-size:14px;color:#0c1e3a;letter-spacing:-0.55px;left:-522.45px;width:1500px;text-align:right;-webkit-text-stroke:0.2px currentColor;">1,320.00</div>
<div class="a t" style="top:658px;height:40px;line-height:40px;font-size:14px;color:#0c1e3a;letter-spacing:-0.55px;left:-342.45px;width:1500px;text-align:right;-webkit-text-stroke:0.2px currentColor;">1,290.00</div>
<div class="a t" style="top:658px;height:40px;line-height:40px;font-size:14px;color:#0c1e3a;letter-spacing:-0.55px;left:-162.45px;width:1500px;text-align:right;-webkit-text-stroke:0.2px currentColor;">8,500.00</div>
<div class="a t" style="top:658px;height:40px;line-height:40px;font-size:14px;color:#0c1e3a;letter-spacing:-0.55px;left:17.55px;width:1500px;text-align:right;-webkit-text-stroke:0.2px currentColor;">1,200.00</div>
<div class="a t" style="top:658px;height:40px;line-height:40px;font-size:14px;color:#0c1e3a;letter-spacing:-0.55px;left:197.55px;width:1500px;text-align:right;-webkit-text-stroke:0.2px currentColor;">1,320.00</div>
<div class="a t" style="top:658px;height:40px;line-height:40px;font-size:14px;color:#0c1e3a;letter-spacing:-0.55px;left:377.55px;width:1500px;text-align:right;-webkit-text-stroke:0.2px currentColor;">1,200.00</div>
<div class="a t" style="top:678px;height:40px;line-height:40px;font-size:14px;color:#000;letter-spacing:-0.027px;left:30px;-webkit-text-stroke:0.2px currentColor;">Meals and client entertainment (business meetings, investor visits, partner lunches)</div>
<div class="a t" style="top:678px;height:40px;line-height:40px;font-size:14px;color:#000;left:-697.00px;width:1500px;text-align:right;-webkit-text-stroke:0.2px currentColor;transform:scaleX(0.84);transform-origin:right center;">USD</div>
<div class="a t" style="top:678px;height:40px;line-height:40px;font-size:14px;color:#0c1e3a;letter-spacing:-0.55px;left:-522.45px;width:1500px;text-align:right;-webkit-text-stroke:0.2px currentColor;">235.00</div>
<div class="a t" style="top:678px;height:40px;line-height:40px;font-size:14px;color:#0c1e3a;letter-spacing:-0.55px;left:-342.45px;width:1500px;text-align:right;-webkit-text-stroke:0.2px currentColor;">215.00</div>
<div class="a t" style="top:678px;height:40px;line-height:40px;font-size:14px;color:#0c1e3a;letter-spacing:-0.55px;left:-162.45px;width:1500px;text-align:right;-webkit-text-stroke:0.2px currentColor;">240.00</div>
<div class="a t" style="top:678px;height:40px;line-height:40px;font-size:14px;color:#0c1e3a;letter-spacing:-0.55px;left:17.55px;width:1500px;text-align:right;-webkit-text-stroke:0.2px currentColor;">235.00</div>
<div class="a t" style="top:678px;height:40px;line-height:40px;font-size:14px;color:#0c1e3a;letter-spacing:-0.55px;left:197.55px;width:1500px;text-align:right;-webkit-text-stroke:0.2px currentColor;">230.00</div>
<div class="a t" style="top:678px;height:40px;line-height:40px;font-size:14px;color:#0c1e3a;letter-spacing:-0.55px;left:377.55px;width:1500px;text-align:right;-webkit-text-stroke:0.2px currentColor;">220.00</div>
<div class="a t" style="top:698px;height:40px;line-height:40px;font-size:14px;color:#000;letter-spacing:-0.023px;left:30px;-webkit-text-stroke:0.2px currentColor;">Mortgage interest payments (if owning land or facilities)</div>
<div class="a t" style="top:698px;height:40px;line-height:40px;font-size:14px;color:#000;left:-697.00px;width:1500px;text-align:right;-webkit-text-stroke:0.2px currentColor;transform:scaleX(0.84);transform-origin:right center;">USD</div>
<div class="a t" style="top:698px;height:40px;line-height:40px;font-size:14px;color:#0c1e3a;letter-spacing:-0.55px;left:-522.45px;width:1500px;text-align:right;-webkit-text-stroke:0.2px currentColor;">870.00</div>
<div class="a t" style="top:698px;height:40px;line-height:40px;font-size:14px;color:#0c1e3a;letter-spacing:-0.55px;left:-342.45px;width:1500px;text-align:right;-webkit-text-stroke:0.2px currentColor;">900.00</div>
<div class="a t" style="top:698px;height:40px;line-height:40px;font-size:14px;color:#0c1e3a;letter-spacing:-0.55px;left:-162.45px;width:1500px;text-align:right;-webkit-text-stroke:0.2px currentColor;">790.00</div>
<div class="a t" style="top:698px;height:40px;line-height:40px;font-size:14px;color:#0c1e3a;letter-spacing:-0.55px;left:17.55px;width:1500px;text-align:right;-webkit-text-stroke:0.2px currentColor;">800.00</div>
<div class="a t" style="top:698px;height:40px;line-height:40px;font-size:14px;color:#0c1e3a;letter-spacing:-0.55px;left:197.55px;width:1500px;text-align:right;-webkit-text-stroke:0.2px currentColor;">890.00</div>
<div class="a t" style="top:698px;height:40px;line-height:40px;font-size:14px;color:#0c1e3a;letter-spacing:-0.55px;left:377.55px;width:1500px;text-align:right;-webkit-text-stroke:0.2px currentColor;">850.00</div>
<div class="a t" style="top:718px;height:40px;line-height:40px;font-size:14px;color:#000;letter-spacing:0.011px;left:30px;-webkit-text-stroke:0.2px currentColor;">General office expenses (software licenses, communication tools, administrative supplies)</div>
<div class="a t" style="top:718px;height:40px;line-height:40px;font-size:14px;color:#000;left:-697.00px;width:1500px;text-align:right;-webkit-text-stroke:0.2px currentColor;transform:scaleX(0.84);transform-origin:right center;">USD</div>
<div class="a t" style="top:718px;height:40px;line-height:40px;font-size:14px;color:#0c1e3a;letter-spacing:-0.55px;left:-522.45px;width:1500px;text-align:right;-webkit-text-stroke:0.2px currentColor;">335.00</div>
<div class="a t" style="top:718px;height:40px;line-height:40px;font-size:14px;color:#0c1e3a;letter-spacing:-0.55px;left:-342.45px;width:1500px;text-align:right;-webkit-text-stroke:0.2px currentColor;">355.00</div>
<div class="a t" style="top:718px;height:40px;line-height:40px;font-size:14px;color:#0c1e3a;letter-spacing:-0.55px;left:-162.45px;width:1500px;text-align:right;-webkit-text-stroke:0.2px currentColor;">335.00</div>
<div class="a t" style="top:718px;height:40px;line-height:40px;font-size:14px;color:#0c1e3a;letter-spacing:-0.55px;left:17.55px;width:1500px;text-align:right;-webkit-text-stroke:0.2px currentColor;">330.00</div>
<div class="a t" style="top:718px;height:40px;line-height:40px;font-size:14px;color:#0c1e3a;letter-spacing:-0.55px;left:197.55px;width:1500px;text-align:right;-webkit-text-stroke:0.2px currentColor;">325.00</div>
<div class="a t" style="top:718px;height:40px;line-height:40px;font-size:14px;color:#0c1e3a;letter-spacing:-0.55px;left:377.55px;width:1500px;text-align:right;-webkit-text-stroke:0.2px currentColor;">295.00</div>
<div class="a t" style="top:738px;height:40px;line-height:40px;font-size:14px;color:#000;letter-spacing:0.068px;left:30px;-webkit-text-stroke:0.2px currentColor;">Additional interest costs (line-of-credit interest, additional financing fees)</div>
<div class="a t" style="top:738px;height:40px;line-height:40px;font-size:14px;color:#000;left:-697.00px;width:1500px;text-align:right;-webkit-text-stroke:0.2px currentColor;transform:scaleX(0.84);transform-origin:right center;">USD</div>
<div class="a t" style="top:738px;height:40px;line-height:40px;font-size:14px;color:#0c1e3a;letter-spacing:-0.55px;left:-522.45px;width:1500px;text-align:right;-webkit-text-stroke:0.2px currentColor;">125.00</div>
<div class="a t" style="top:738px;height:40px;line-height:40px;font-size:14px;color:#0c1e3a;letter-spacing:-0.55px;left:-342.45px;width:1500px;text-align:right;-webkit-text-stroke:0.2px currentColor;">130.00</div>
<div class="a t" style="top:738px;height:40px;line-height:40px;font-size:14px;color:#0c1e3a;letter-spacing:-0.55px;left:-162.45px;width:1500px;text-align:right;-webkit-text-stroke:0.2px currentColor;">120.00</div>
<div class="a t" style="top:738px;height:40px;line-height:40px;font-size:14px;color:#0c1e3a;letter-spacing:-0.55px;left:17.55px;width:1500px;text-align:right;-webkit-text-stroke:0.2px currentColor;">135.00</div>
<div class="a t" style="top:738px;height:40px;line-height:40px;font-size:14px;color:#0c1e3a;letter-spacing:-0.55px;left:197.55px;width:1500px;text-align:right;-webkit-text-stroke:0.2px currentColor;">125.00</div>
<div class="a t" style="top:738px;height:40px;line-height:40px;font-size:14px;color:#0c1e3a;letter-spacing:-0.55px;left:377.55px;width:1500px;text-align:right;-webkit-text-stroke:0.2px currentColor;">120.00</div>
<div class="a t" style="top:758px;height:40px;line-height:40px;font-size:14px;color:#000;letter-spacing:0.003px;left:30px;-webkit-text-stroke:0.2px currentColor;">Pension and retirement contributions (employee retirement plans)</div>
<div class="a t" style="top:758px;height:40px;line-height:40px;font-size:14px;color:#000;left:-697.00px;width:1500px;text-align:right;-webkit-text-stroke:0.2px currentColor;transform:scaleX(0.84);transform-origin:right center;">USD</div>
<div class="a t" style="top:758px;height:40px;line-height:40px;font-size:14px;color:#0c1e3a;letter-spacing:-0.55px;left:-522.45px;width:1500px;text-align:right;-webkit-text-stroke:0.2px currentColor;">445.00</div>
<div class="a t" style="top:758px;height:40px;line-height:40px;font-size:14px;color:#0c1e3a;letter-spacing:-0.55px;left:-342.45px;width:1500px;text-align:right;-webkit-text-stroke:0.2px currentColor;">475.00</div>
<div class="a t" style="top:758px;height:40px;line-height:40px;font-size:14px;color:#0c1e3a;letter-spacing:-0.55px;left:-162.45px;width:1500px;text-align:right;-webkit-text-stroke:0.2px currentColor;">425.00</div>
<div class="a t" style="top:758px;height:40px;line-height:40px;font-size:14px;color:#0c1e3a;letter-spacing:-0.55px;left:17.55px;width:1500px;text-align:right;-webkit-text-stroke:0.2px currentColor;">415.00</div>
<div class="a t" style="top:758px;height:40px;line-height:40px;font-size:14px;color:#0c1e3a;letter-spacing:-0.55px;left:197.55px;width:1500px;text-align:right;-webkit-text-stroke:0.2px currentColor;">460.00</div>
<div class="a t" style="top:758px;height:40px;line-height:40px;font-size:14px;color:#0c1e3a;letter-spacing:-0.55px;left:377.55px;width:1500px;text-align:right;-webkit-text-stroke:0.2px currentColor;">400.00</div>
<div class="a t" style="top:778px;height:40px;line-height:40px;font-size:14px;color:#000;letter-spacing:-0.128px;left:30px;-webkit-text-stroke:0.2px currentColor;">Inventory purchases for resale (rare — spare parts or PV components for clients)</div>
<div class="a t" style="top:778px;height:40px;line-height:40px;font-size:14px;color:#000;left:-697.00px;width:1500px;text-align:right;-webkit-text-stroke:0.2px currentColor;transform:scaleX(0.84);transform-origin:right center;">USD</div>
<div class="a t" style="top:778px;height:40px;line-height:40px;font-size:14px;color:#0c1e3a;letter-spacing:-0.55px;left:-522.45px;width:1500px;text-align:right;-webkit-text-stroke:0.2px currentColor;">990.00</div>
<div class="a t" style="top:778px;height:40px;line-height:40px;font-size:14px;color:#0c1e3a;letter-spacing:-0.55px;left:-342.45px;width:1500px;text-align:right;-webkit-text-stroke:0.2px currentColor;">1,040.00</div>
<div class="a t" style="top:778px;height:40px;line-height:40px;font-size:14px;color:#0c1e3a;letter-spacing:-0.55px;left:-162.45px;width:1500px;text-align:right;-webkit-text-stroke:0.2px currentColor;">900.00</div>
<div class="a t" style="top:778px;height:40px;line-height:40px;font-size:14px;color:#0c1e3a;letter-spacing:-0.55px;left:17.55px;width:1500px;text-align:right;-webkit-text-stroke:0.2px currentColor;">910.00</div>
<div class="a t" style="top:778px;height:40px;line-height:40px;font-size:14px;color:#0c1e3a;letter-spacing:-0.55px;left:197.55px;width:1500px;text-align:right;-webkit-text-stroke:0.2px currentColor;">930.00</div>
<div class="a t" style="top:778px;height:40px;line-height:40px;font-size:14px;color:#0c1e3a;letter-spacing:-0.55px;left:377.55px;width:1500px;text-align:right;-webkit-text-stroke:0.2px currentColor;">960.00</div>
<div class="a t" style="top:798px;height:40px;line-height:40px;font-size:14px;color:#000;letter-spacing:-0.146px;left:30px;-webkit-text-stroke:0.2px currentColor;">Rent or lease payments (land lease, office space, storage)</div>
<div class="a t" style="top:798px;height:40px;line-height:40px;font-size:14px;color:#000;left:-697.00px;width:1500px;text-align:right;-webkit-text-stroke:0.2px currentColor;transform:scaleX(0.84);transform-origin:right center;">USD</div>
<div class="a t" style="top:798px;height:40px;line-height:40px;font-size:14px;color:#0c1e3a;letter-spacing:-0.55px;left:-522.45px;width:1500px;text-align:right;-webkit-text-stroke:0.2px currentColor;">2,230.00</div>
<div class="a t" style="top:798px;height:40px;line-height:40px;font-size:14px;color:#0c1e3a;letter-spacing:-0.55px;left:-342.45px;width:1500px;text-align:right;-webkit-text-stroke:0.2px currentColor;">2,030.00</div>
<div class="a t" style="top:798px;height:40px;line-height:40px;font-size:14px;color:#0c1e3a;letter-spacing:-0.55px;left:-162.45px;width:1500px;text-align:right;-webkit-text-stroke:0.2px currentColor;">2,200.00</div>
<div class="a t" style="top:798px;height:40px;line-height:40px;font-size:14px;color:#0c1e3a;letter-spacing:-0.55px;left:17.55px;width:1500px;text-align:right;-webkit-text-stroke:0.2px currentColor;">2,030.00</div>
<div class="a t" style="top:798px;height:40px;line-height:40px;font-size:14px;color:#0c1e3a;letter-spacing:-0.55px;left:197.55px;width:1500px;text-align:right;-webkit-text-stroke:0.2px currentColor;">2,330.00</div>
<div class="a t" style="top:798px;height:40px;line-height:40px;font-size:14px;color:#0c1e3a;letter-spacing:-0.55px;left:377.55px;width:1500px;text-align:right;-webkit-text-stroke:0.2px currentColor;">1,950.00</div>
<div class="a" style="left:805px;top:547px;width:1065px;height:1px;background:repeating-linear-gradient(90deg,#666 0 2px,#fff 2px 4px);"></div>
<div class="a" style="left:805px;top:567px;width:1065px;height:1px;background:repeating-linear-gradient(90deg,#666 0 2px,#fff 2px 4px);"></div>
<div class="a" style="left:805px;top:587px;width:1065px;height:1px;background:repeating-linear-gradient(90deg,#666 0 2px,#fff 2px 4px);"></div>
<div class="a" style="left:805px;top:607px;width:1065px;height:1px;background:repeating-linear-gradient(90deg,#666 0 2px,#fff 2px 4px);"></div>
<div class="a" style="left:805px;top:627px;width:1065px;height:1px;background:repeating-linear-gradient(90deg,#666 0 2px,#fff 2px 4px);"></div>
<div class="a" style="left:805px;top:647px;width:1065px;height:1px;background:repeating-linear-gradient(90deg,#666 0 2px,#fff 2px 4px);"></div>
<div class="a" style="left:805px;top:667px;width:1065px;height:1px;background:repeating-linear-gradient(90deg,#666 0 2px,#fff 2px 4px);"></div>
<div class="a" style="left:805px;top:687px;width:1065px;height:1px;background:repeating-linear-gradient(90deg,#666 0 2px,#fff 2px 4px);"></div>
<div class="a" style="left:805px;top:707px;width:1065px;height:1px;background:repeating-linear-gradient(90deg,#666 0 2px,#fff 2px 4px);"></div>
<div class="a" style="left:805px;top:727px;width:1065px;height:1px;background:repeating-linear-gradient(90deg,#666 0 2px,#fff 2px 4px);"></div>
<div class="a" style="left:805px;top:747px;width:1065px;height:1px;background:repeating-linear-gradient(90deg,#666 0 2px,#fff 2px 4px);"></div>
<div class="a" style="left:805px;top:767px;width:1065px;height:1px;background:repeating-linear-gradient(90deg,#666 0 2px,#fff 2px 4px);"></div>
<div class="a" style="left:805px;top:787px;width:1065px;height:1px;background:repeating-linear-gradient(90deg,#666 0 2px,#fff 2px 4px);"></div>
<div class="a" style="left:805px;top:807px;width:1065px;height:1px;background:repeating-linear-gradient(90deg,#666 0 2px,#fff 2px 4px);"></div>
<div class="a" style="left:805px;top:827px;width:1065px;height:1px;background:repeating-linear-gradient(90deg,#666 0 2px,#fff 2px 4px);"></div>
<div class="a" style="left:805px;top:529px;width:1px;height:299px;background:repeating-linear-gradient(180deg,#666 0 2px,#fff 2px 4px);"></div>
<div class="a" style="left:985px;top:529px;width:1px;height:299px;background:repeating-linear-gradient(180deg,#666 0 2px,#fff 2px 4px);"></div>
<div class="a" style="left:1165px;top:529px;width:1px;height:299px;background:repeating-linear-gradient(180deg,#666 0 2px,#fff 2px 4px);"></div>
<div class="a" style="left:1345px;top:529px;width:1px;height:299px;background:repeating-linear-gradient(180deg,#666 0 2px,#fff 2px 4px);"></div>
<div class="a" style="left:1525px;top:529px;width:1px;height:299px;background:repeating-linear-gradient(180deg,#666 0 2px,#fff 2px 4px);"></div>
<div class="a" style="left:1705px;top:529px;width:1px;height:299px;background:repeating-linear-gradient(180deg,#666 0 2px,#fff 2px 4px);"></div>
</div>
<div class="a" style="left:1894px;top:77px;width:1px;height:829px;background:#5a5a5a;"></div>
<div class="a" style="left:0px;top:906px;width:1895px;height:1px;background:#5a5a5a;"></div>
<div class="a" style="left:0px;top:58px;width:25px;height:19px;background:#dadada;"></div>
<svg class="a" style="left:9px;top:61px" width="16" height="15"><path d="M1.5 13.5 L13.5 1.5 L13.5 13.5 Z" fill="#fff" stroke="#000" stroke-width="1.2"/></svg>
<div class="a" style="left:25px;top:58px;width:28px;height:20px;background:#0033a0;"></div>
<div class="a" style="left:25px;top:77px;width:1870px;height:1px;background:#6a6a6a;"></div>
<div class="a t" style="top:49px;height:40px;line-height:40px;font-size:12.5px;color:#fff;left:18.50px;width:40px;text-align:center;">A</div>
<div class="a t" style="top:49px;height:40px;line-height:40px;font-size:12.5px;color:#000;left:396.50px;width:60px;text-align:center;-webkit-text-stroke:0.2px currentColor;">B</div>
<div class="a t" style="top:49px;height:40px;line-height:40px;font-size:12.5px;color:#000;left:785.50px;width:60px;text-align:center;-webkit-text-stroke:0.2px currentColor;">C</div>
<div class="a t" style="top:49px;height:40px;line-height:40px;font-size:12.5px;color:#000;left:890.00px;width:60px;text-align:center;-webkit-text-stroke:0.2px currentColor;">D</div>
<div class="a t" style="top:49px;height:40px;line-height:40px;font-size:12.5px;color:#000;left:1070.00px;width:60px;text-align:center;-webkit-text-stroke:0.2px currentColor;">E</div>
<div class="a t" style="top:49px;height:40px;line-height:40px;font-size:12.5px;color:#000;left:1250.00px;width:60px;text-align:center;-webkit-text-stroke:0.2px currentColor;">F</div>
<div class="a t" style="top:49px;height:40px;line-height:40px;font-size:12.5px;color:#000;left:1430.00px;width:60px;text-align:center;-webkit-text-stroke:0.2px currentColor;">G</div>
<div class="a t" style="top:49px;height:40px;line-height:40px;font-size:12.5px;color:#000;left:1610.00px;width:60px;text-align:center;-webkit-text-stroke:0.2px currentColor;">H</div>
<div class="a t" style="top:49px;height:40px;line-height:40px;font-size:12.5px;color:#000;left:1790.00px;width:60px;text-align:center;-webkit-text-stroke:0.2px currentColor;">I</div>
<div class="a" style="left:801px;top:58px;width:1px;height:19px;background:#6a6a6a;"></div>
<div class="a" style="left:830px;top:58px;width:1px;height:19px;background:#6a6a6a;"></div>
<div class="a" style="left:1010px;top:58px;width:1px;height:19px;background:#6a6a6a;"></div>
<div class="a" style="left:1190px;top:58px;width:1px;height:19px;background:#6a6a6a;"></div>
<div class="a" style="left:1370px;top:58px;width:1px;height:19px;background:#6a6a6a;"></div>
<div class="a" style="left:1550px;top:58px;width:1px;height:19px;background:#6a6a6a;"></div>
<div class="a" style="left:1730px;top:58px;width:1px;height:19px;background:#6a6a6a;"></div>
<div class="a" style="left:25px;top:77px;width:1px;height:829px;background:#6a6a6a;"></div>
<div class="a" style="left:0px;top:77px;width:25px;height:20px;background:#0033a0;"></div>
<div class="a t" style="top:68px;height:40px;line-height:40px;font-size:14px;color:#fff;left:0.00px;width:25px;text-align:center;">1</div>
<div class="a t" style="top:125px;height:40px;line-height:40px;font-size:14px;color:#000;left:0.00px;width:25px;text-align:center;-webkit-text-stroke:0.2px currentColor;">2</div>
<div class="a" style="left:0px;top:154px;width:25px;height:1px;background:#6a6a6a;"></div>
<div class="a t" style="top:145px;height:40px;line-height:40px;font-size:14px;color:#000;left:0.00px;width:25px;text-align:center;-webkit-text-stroke:0.2px currentColor;">3</div>
<div class="a" style="left:0px;top:174px;width:25px;height:1px;background:#6a6a6a;"></div>
<div class="a t" style="top:165px;height:40px;line-height:40px;font-size:14px;color:#000;left:0.00px;width:25px;text-align:center;-webkit-text-stroke:0.2px currentColor;">4</div>
<div class="a" style="left:0px;top:194px;width:25px;height:1px;background:#6a6a6a;"></div>
<div class="a t" style="top:185px;height:40px;line-height:40px;font-size:14px;color:#000;left:0.00px;width:25px;text-align:center;-webkit-text-stroke:0.2px currentColor;">5</div>
<div class="a" style="left:0px;top:214px;width:25px;height:1px;background:#6a6a6a;"></div>
<div class="a t" style="top:205px;height:40px;line-height:40px;font-size:14px;color:#000;left:0.00px;width:25px;text-align:center;-webkit-text-stroke:0.2px currentColor;">6</div>
<div class="a" style="left:0px;top:234px;width:25px;height:1px;background:#6a6a6a;"></div>
<div class="a t" style="top:273px;height:40px;line-height:40px;font-size:14px;color:#000;left:0.00px;width:25px;text-align:center;-webkit-text-stroke:0.2px currentColor;">7</div>
<div class="a" style="left:0px;top:302px;width:25px;height:1px;background:#6a6a6a;"></div>
<div class="a t" style="top:293px;height:40px;line-height:40px;font-size:14px;color:#000;left:0.00px;width:25px;text-align:center;-webkit-text-stroke:0.2px currentColor;">8</div>
<div class="a" style="left:0px;top:322px;width:25px;height:1px;background:#6a6a6a;"></div>
<div class="a t" style="top:313px;height:40px;line-height:40px;font-size:14px;color:#000;left:0.00px;width:25px;text-align:center;-webkit-text-stroke:0.2px currentColor;">9</div>
<div class="a" style="left:0px;top:342px;width:25px;height:1px;background:#6a6a6a;"></div>
<div class="a t" style="top:333px;height:40px;line-height:40px;font-size:14px;color:#000;letter-spacing:-0.8px;left:0.40px;width:25px;text-align:center;-webkit-text-stroke:0.2px currentColor;">10</div>
<div class="a" style="left:0px;top:362px;width:25px;height:1px;background:#6a6a6a;"></div>
<div class="a t" style="top:353px;height:40px;line-height:40px;font-size:14px;color:#000;letter-spacing:-0.8px;left:0.40px;width:25px;text-align:center;-webkit-text-stroke:0.2px currentColor;">11</div>
<div class="a" style="left:0px;top:382px;width:25px;height:1px;background:#6a6a6a;"></div>
<div class="a t" style="top:373px;height:40px;line-height:40px;font-size:14px;color:#000;letter-spacing:-0.8px;left:0.40px;width:25px;text-align:center;-webkit-text-stroke:0.2px currentColor;">12</div>
<div class="a" style="left:0px;top:402px;width:25px;height:1px;background:#6a6a6a;"></div>
<div class="a t" style="top:393px;height:40px;line-height:40px;font-size:14px;color:#000;letter-spacing:-0.8px;left:0.40px;width:25px;text-align:center;-webkit-text-stroke:0.2px currentColor;">13</div>
<div class="a" style="left:0px;top:422px;width:25px;height:1px;background:#6a6a6a;"></div>
<div class="a t" style="top:413px;height:40px;line-height:40px;font-size:14px;color:#000;letter-spacing:-0.8px;left:0.40px;width:25px;text-align:center;-webkit-text-stroke:0.2px currentColor;">14</div>
<div class="a" style="left:0px;top:442px;width:25px;height:1px;background:#6a6a6a;"></div>
<div class="a t" style="top:433px;height:40px;line-height:40px;font-size:14px;color:#000;letter-spacing:-0.8px;left:0.40px;width:25px;text-align:center;-webkit-text-stroke:0.2px currentColor;">15</div>
<div class="a" style="left:0px;top:462px;width:25px;height:1px;background:#6a6a6a;"></div>
<div class="a t" style="top:453px;height:40px;line-height:40px;font-size:14px;color:#000;letter-spacing:-0.8px;left:0.40px;width:25px;text-align:center;-webkit-text-stroke:0.2px currentColor;">16</div>
<div class="a" style="left:0px;top:482px;width:25px;height:1px;background:#6a6a6a;"></div>
<div class="a t" style="top:473px;height:40px;line-height:40px;font-size:14px;color:#000;letter-spacing:-0.8px;left:0.40px;width:25px;text-align:center;-webkit-text-stroke:0.2px currentColor;">17</div>
<div class="a" style="left:0px;top:502px;width:25px;height:1px;background:#6a6a6a;"></div>
<div class="a t" style="top:493px;height:40px;line-height:40px;font-size:14px;color:#000;letter-spacing:-0.8px;left:0.40px;width:25px;text-align:center;-webkit-text-stroke:0.2px currentColor;">18</div>
<div class="a" style="left:0px;top:522px;width:25px;height:1px;background:#6a6a6a;"></div>
<div class="a t" style="top:513px;height:40px;line-height:40px;font-size:14px;color:#000;letter-spacing:-0.8px;left:0.40px;width:25px;text-align:center;-webkit-text-stroke:0.2px currentColor;">19</div>
<div class="a" style="left:0px;top:542px;width:25px;height:1px;background:#6a6a6a;"></div>
<div class="a t" style="top:533px;height:40px;line-height:40px;font-size:14px;color:#000;letter-spacing:-0.8px;left:0.40px;width:25px;text-align:center;-webkit-text-stroke:0.2px currentColor;">20</div>
<div class="a" style="left:0px;top:563px;width:25px;height:1px;background:#6a6a6a;"></div>
<div class="a t" style="top:555px;height:40px;line-height:40px;font-size:14px;color:#000;letter-spacing:-0.8px;left:0.40px;width:25px;text-align:center;-webkit-text-stroke:0.2px currentColor;">21</div>
<div class="a" style="left:0px;top:584px;width:25px;height:1px;background:#6a6a6a;"></div>
<div class="a t" style="top:575px;height:40px;line-height:40px;font-size:14px;color:#000;letter-spacing:-0.8px;left:0.40px;width:25px;text-align:center;-webkit-text-stroke:0.2px currentColor;">22</div>
<div class="a" style="left:0px;top:604px;width:25px;height:1px;background:#6a6a6a;"></div>
<div class="a t" style="top:595px;height:40px;line-height:40px;font-size:14px;color:#000;letter-spacing:-0.8px;left:0.40px;width:25px;text-align:center;-webkit-text-stroke:0.2px currentColor;">23</div>
<div class="a" style="left:0px;top:624px;width:25px;height:1px;background:#6a6a6a;"></div>
<div class="a t" style="top:615px;height:40px;line-height:40px;font-size:14px;color:#000;letter-spacing:-0.8px;left:0.40px;width:25px;text-align:center;-webkit-text-stroke:0.2px currentColor;">24</div>
<div class="a" style="left:0px;top:644px;width:25px;height:1px;background:#6a6a6a;"></div>
<div class="a t" style="top:635px;height:40px;line-height:40px;font-size:14px;color:#000;letter-spacing:-0.8px;left:0.40px;width:25px;text-align:center;-webkit-text-stroke:0.2px currentColor;">25</div>
<div class="a" style="left:0px;top:664px;width:25px;height:1px;background:#6a6a6a;"></div>
<div class="a t" style="top:655px;height:40px;line-height:40px;font-size:14px;color:#000;letter-spacing:-0.8px;left:0.40px;width:25px;text-align:center;-webkit-text-stroke:0.2px currentColor;">26</div>
<div class="a" style="left:0px;top:684px;width:25px;height:1px;background:#6a6a6a;"></div>
<div class="a t" style="top:675px;height:40px;line-height:40px;font-size:14px;color:#000;letter-spacing:-0.8px;left:0.40px;width:25px;text-align:center;-webkit-text-stroke:0.2px currentColor;">27</div>
<div class="a" style="left:0px;top:704px;width:25px;height:1px;background:#6a6a6a;"></div>
<div class="a t" style="top:695px;height:40px;line-height:40px;font-size:14px;color:#000;letter-spacing:-0.8px;left:0.40px;width:25px;text-align:center;-webkit-text-stroke:0.2px currentColor;">28</div>
<div class="a" style="left:0px;top:724px;width:25px;height:1px;background:#6a6a6a;"></div>
<div class="a t" style="top:715px;height:40px;line-height:40px;font-size:14px;color:#000;letter-spacing:-0.8px;left:0.40px;width:25px;text-align:center;-webkit-text-stroke:0.2px currentColor;">29</div>
<div class="a" style="left:0px;top:744px;width:25px;height:1px;background:#6a6a6a;"></div>
<div class="a t" style="top:735px;height:40px;line-height:40px;font-size:14px;color:#000;letter-spacing:-0.8px;left:0.40px;width:25px;text-align:center;-webkit-text-stroke:0.2px currentColor;">30</div>
<div class="a" style="left:0px;top:764px;width:25px;height:1px;background:#6a6a6a;"></div>
<div class="a t" style="top:755px;height:40px;line-height:40px;font-size:14px;color:#000;letter-spacing:-0.8px;left:0.40px;width:25px;text-align:center;-webkit-text-stroke:0.2px currentColor;">31</div>
<div class="a" style="left:0px;top:784px;width:25px;height:1px;background:#6a6a6a;"></div>
<div class="a t" style="top:775px;height:40px;line-height:40px;font-size:14px;color:#000;letter-spacing:-0.8px;left:0.40px;width:25px;text-align:center;-webkit-text-stroke:0.2px currentColor;">32</div>
<div class="a" style="left:0px;top:804px;width:25px;height:1px;background:#6a6a6a;"></div>
<div class="a t" style="top:795px;height:40px;line-height:40px;font-size:14px;color:#000;letter-spacing:-0.8px;left:0.40px;width:25px;text-align:center;-webkit-text-stroke:0.2px currentColor;">33</div>
<div class="a" style="left:0px;top:824px;width:25px;height:1px;background:#6a6a6a;"></div>
<div class="a t" style="top:815px;height:40px;line-height:40px;font-size:14px;color:#000;letter-spacing:-0.8px;left:0.40px;width:25px;text-align:center;-webkit-text-stroke:0.2px currentColor;">34</div>
<div class="a" style="left:0px;top:844px;width:25px;height:1px;background:#6a6a6a;"></div>
<div class="a t" style="top:835px;height:40px;line-height:40px;font-size:14px;color:#000;letter-spacing:-0.8px;left:0.40px;width:25px;text-align:center;-webkit-text-stroke:0.2px currentColor;">35</div>
<div class="a" style="left:0px;top:864px;width:25px;height:1px;background:#6a6a6a;"></div>
<div class="a t" style="top:855px;height:40px;line-height:40px;font-size:14px;color:#000;letter-spacing:-0.8px;left:0.40px;width:25px;text-align:center;-webkit-text-stroke:0.2px currentColor;">36</div>
<div class="a" style="left:0px;top:884px;width:25px;height:1px;background:#6a6a6a;"></div>
<div class="a t" style="top:875px;height:40px;line-height:40px;font-size:14px;color:#000;letter-spacing:-0.8px;left:0.40px;width:25px;text-align:center;-webkit-text-stroke:0.2px currentColor;">37</div>
<div class="a" style="left:0px;top:904px;width:25px;height:1px;background:#6a6a6a;"></div>
<div class="a" style="left:0px;top:905px;width:25px;height:1px;background:#6a6a6a;"></div>
<div class="a" style="left:24px;top:76px;width:30px;height:22px;box-sizing:border-box;border:3px solid #0033a0;"></div>
<div class="a" style="left:49px;top:94px;width:6px;height:6px;background:#0033a0;"></div>
<div class="a" style="left:1898px;top:61px;width:18px;height:18px;background:#fff;box-sizing:border-box;border:1px solid #6a6a6a;"></div>
<svg class="a" style="left:1902px;top:66px" width="10" height="6"><path d="M0.5 5.5 L5 0.5 L9.5 5.5 Z" fill="#111"/></svg>
<div class="a" style="left:1898px;top:79px;width:18px;height:487px;background:#fff;box-sizing:border-box;border:1px solid #5a5a5a;"></div>
<div class="a" style="left:1898px;top:889px;width:18px;height:18px;background:#fff;box-sizing:border-box;border:1px solid #6a6a6a;"></div>
<svg class="a" style="left:1902px;top:895px" width="10" height="6"><path d="M0.5 0.5 L5 5.5 L9.5 0.5 Z" fill="#111"/></svg>
<div class="a" style="left:0px;top:938px;width:1920px;height:1px;background:#a8a8a8;"></div>
<svg class="a" style="left:29px;top:917px" width="8" height="11"><path d="M6.5 0.5 L0.5 5.25 L6.5 10 Z" fill="#222"/></svg>
<svg class="a" style="left:61px;top:917px" width="8" height="11"><path d="M0.5 0.5 L6.5 5.25 L0.5 10 Z" fill="#222"/></svg>
<div class="a" style="left:112px;top:910px;width:1px;height:24px;background:#555;"></div>
<div class="a" style="left:232px;top:910px;width:1px;height:24px;background:#555;"></div>
<div class="a" style="left:340px;top:910px;width:1px;height:24px;background:#555;"></div>
<div class="a" style="left:766px;top:910px;width:1px;height:24px;background:#555;"></div>
<div class="a" style="left:115px;top:909px;width:115px;height:26px;background:#05154e;"></div>
<div class="a t" style="top:900px;height:40px;line-height:40px;font-size:16.4px;color:#fff;left:95.00px;width:155px;text-align:center;">Cover Sheet</div>
<div class="a t" style="top:900px;height:40px;line-height:40px;font-size:16.4px;color:#111;left:213.00px;width:147px;text-align:center;-webkit-text-stroke:0.2px currentColor;">Disclaimer</div>
<div class="a" style="left:343px;top:909px;width:94px;height:26px;background:#801a00;"></div>
<div class="a t" style="top:900px;height:40px;line-height:40px;font-size:16.4px;color:#fff;left:323.00px;width:134px;text-align:center;">Overview</div>
<div class="a" style="left:439px;top:906px;width:176px;height:29px;background:#f0f0f0;box-sizing:border-box;border-left:1px solid #333;border-right:1px solid #333;"></div>
<div class="a" style="left:442px;top:909px;width:170px;height:23px;background:#1180be;"></div>
<div class="a" style="left:439px;top:932px;width:176px;height:2px;background:#0b3317;"></div>
<div class="a t" style="top:901px;height:40px;line-height:40px;font-size:16.0px;color:#000;font-weight:bold;left:417.00px;width:220px;text-align:center;">Cash Flow Forecast</div>
<div class="a" style="left:617px;top:909px;width:148px;height:26px;background:#4e9f1c;"></div>
<div class="a t" style="top:900px;height:40px;line-height:40px;font-size:16.4px;color:#111;left:597.00px;width:188px;text-align:center;-webkit-text-stroke:0.2px currentColor;">Cash Flow Chart</div>
<svg class="a" style="left:804px;top:912px" width="22" height="22"><circle cx="11" cy="11" r="9.5" fill="none" stroke="#111" stroke-width="1.4"/><path d="M11 6 V16 M6 11 H16" stroke="#111" stroke-width="1.6"/></svg>
<div class="a" style="left:1601px;top:917px;width:3px;height:3px;background:#111;"></div>
<div class="a" style="left:1601px;top:922px;width:3px;height:3px;background:#111;"></div>
<div class="a" style="left:1601px;top:927px;width:3px;height:3px;background:#111;"></div>
<div class="a" style="left:1621px;top:914px;width:19px;height:18px;background:#fff;box-sizing:border-box;border:1px solid #555;"></div>
<svg class="a" style="left:1626px;top:918px" width="8" height="11"><path d="M6.5 0.5 L0.5 5.25 L6.5 10 Z" fill="#111"/></svg>
<div class="a" style="left:1639px;top:914px;width:139px;height:18px;background:#fff;box-sizing:border-box;border:1px solid #555;"></div>
<div class="a" style="left:1876px;top:914px;width:19px;height:18px;background:#fff;box-sizing:border-box;border:1px solid #555;"></div>
<svg class="a" style="left:1882px;top:918px" width="8" height="11"><path d="M0.5 0.5 L6.5 5.25 L0.5 10 Z" fill="#111"/></svg>
<div class="a t" style="top:933px;height:40px;line-height:40px;font-size:12.5px;color:#222;left:14px;-webkit-text-stroke:0.2px currentColor;">Ready</div>
<svg class="a" style="left:70px;top:940px" width="26" height="22"><rect x="8.65" y="8.65" width="12.7" height="10.2" fill="#fff" stroke="#000" stroke-width="1.3"/><rect x="14.6" y="5.1" width="7.4" height="3.6" fill="#000"/><circle cx="10.5" cy="7.3" r="3.5" fill="#000"/><g fill="#000"><rect x="14.2" y="10.2" width="1.9" height="1.3"/><rect x="17.3" y="10.2" width="1.9" height="1.3"/><rect x="10.9" y="13.1" width="1.9" height="1.3"/><rect x="14.2" y="13.1" width="1.9" height="1.3"/><rect x="17.3" y="13.1" width="1.9" height="1.3"/><rect x="10.9" y="16.0" width="1.9" height="1.3"/><rect x="14.2" y="16.0" width="1.9" height="1.3"/><rect x="17.3" y="16.0" width="1.9" height="1.3"/></g></svg>
<svg class="a" style="left:110px;top:940px" width="30" height="26"><path d="M11.78 5.51 A7 7 0 0 0 6.15 10.94 M6.02 12.89 A7 7 0 0 0 11.78 19.29" fill="none" stroke="#000" stroke-width="1.5"/><path d="M13.5 4 V12" stroke="#000" stroke-width="1.3"/><path d="M11.2 10.3 L13.5 12.6 L15.8 10.3" fill="none" stroke="#000" stroke-width="1.4"/><path d="M15.8 10.6 H21.3" stroke="#000" stroke-width="1.3"/><path d="M19.3 8.5 L21.5 10.6 L19.3 12.6" fill="none" stroke="#000" stroke-width="1.4"/><path d="M15.6 14.2 L24.3 21.6 M24.3 14.0 L15.6 21.6" stroke="#000" stroke-width="2.3"/></svg>
<div class="a t" style="top:933px;height:40px;line-height:40px;font-size:12.7px;color:#111;font-weight:bold;left:138px;">Accessibility: Investigate</div>
<svg class="a" style="left:1400px;top:938px" width="32" height="28"><rect x="9" y="5" width="19" height="12.8" rx="0.8" fill="#000"/><rect x="13" y="21" width="5" height="2" fill="#000"/><circle cx="22.5" cy="18.3" r="6" fill="#dadada"/><g transform="translate(22.5 18.3)" fill="#000"><circle r="3.8"/><rect x="-1.1" y="-5.3" width="2.2" height="2.4" transform="rotate(0)"/><rect x="-1.1" y="-5.3" width="2.2" height="2.4" transform="rotate(45)"/><rect x="-1.1" y="-5.3" width="2.2" height="2.4" transform="rotate(90)"/><rect x="-1.1" y="-5.3" width="2.2" height="2.4" transform="rotate(135)"/><rect x="-1.1" y="-5.3" width="2.2" height="2.4" transform="rotate(180)"/><rect x="-1.1" y="-5.3" width="2.2" height="2.4" transform="rotate(225)"/><rect x="-1.1" y="-5.3" width="2.2" height="2.4" transform="rotate(270)"/><rect x="-1.1" y="-5.3" width="2.2" height="2.4" transform="rotate(315)"/><rect x="-1.3" y="-1.3" width="2.6" height="2.6" fill="#fff"/></g></svg>
<div class="a t" style="top:933px;height:40px;line-height:40px;font-size:12.7px;color:#111;left:1430px;-webkit-text-stroke:0.2px currentColor;">Display Settings</div>
<div class="a" style="left:1547px;top:939px;width:50px;height:27px;background:#a3a3a3;"></div>
<svg class="a" style="left:1564px;top:945px" width="15" height="13"><rect x="0.75" y="0.75" width="13" height="11" fill="#fff" stroke="#111" stroke-width="1.5"/><path d="M1 4.5 H14 M1 8 H14 M5 1 V12 M9.5 1 V12" stroke="#111" stroke-width="1.3"/></svg>
<svg class="a" style="left:1615px;top:945px" width="15" height="13"><rect x="0.75" y="0.75" width="12.5" height="11" fill="none" stroke="#111" stroke-width="1.5"/><path d="M4 4 H10 M4 6.5 H10 M4 9 H10" stroke="#111" stroke-width="1.2"/></svg>
<svg class="a" style="left:1665px;top:945px" width="15" height="13"><rect x="0.75" y="0.75" width="12.5" height="11" fill="none" stroke="#111" stroke-width="1.5"/><path d="M0.75 8 H13.25 M5 1 V8 M9 1 V8" stroke="#111" stroke-width="1.5"/></svg>
<div class="a" style="left:1698px;top:939px;width:22px;height:27px;background:#a3a3a3;"></div>
<div class="a" style="left:1704px;top:951px;width:10px;height:1.5px;background:#111;"></div>
<div class="a" style="left:1720px;top:951.5px;width:125px;height:1.2px;background:#111;"></div>
<div class="a" style="left:1767px;top:945px;width:6px;height:14px;background:#111;"></div>
<div class="a" style="left:1782px;top:949px;width:1px;height:7px;background:#111;"></div>
<div class="a" style="left:1851px;top:951px;width:10px;height:1.5px;background:#111;"></div>
<div class="a" style="left:1855.25px;top:947px;width:1.5px;height:10px;background:#111;"></div>
<div class="a t" style="top:933px;height:40px;line-height:40px;font-size:12.0px;color:#111;left:1877px;-webkit-text-stroke:0.2px currentColor;">80%</div>
</body></html>
